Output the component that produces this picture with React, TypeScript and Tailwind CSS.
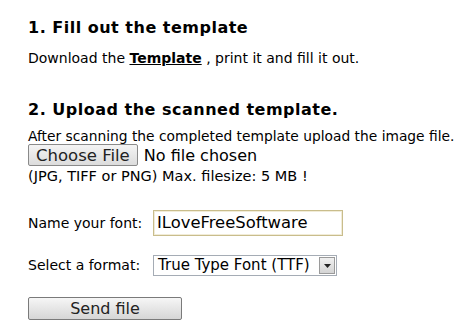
export default function App() {
  const f = { fontFamily: '"DejaVu Sans", Verdana, sans-serif' };
  return (
    <div className="w-[462px] h-[325px] bg-white text-black overflow-hidden pl-[28px] pt-[18px]" style={f}>
      <h2 className="text-[16px] font-bold leading-[20px] tracking-[0.5px]">1. Fill out the template</h2>
      <p className="text-[14px] leading-[16px] mt-[12px] whitespace-nowrap">
        Download the <span className="font-bold underline">Template</span> , print it and fill it out.
      </p>
      <h2 className="text-[16px] font-bold leading-[20px] tracking-[0.5px] mt-[34px]">2. Upload the scanned template.</h2>
      <p className="text-[13.8px] leading-[16px] mt-[8px] whitespace-nowrap">After scanning the completed template upload the image file.</p>
      <div className="flex items-center h-[22px]">
        <button className="h-[22px] px-[7px] border border-[#8a8a8a] rounded-[2px] bg-gradient-to-b from-[#f4f4f4] to-[#dcdcdc] text-[16.5px] leading-[19px] text-[#222]">Choose File</button>
        <span className="text-[16px] ml-[6px] leading-[19px]">No file chosen</span>
      </div>
      <p className="text-[14.5px] leading-[16px] mt-[2px] whitespace-nowrap">(JPG, TIFF or PNG) Max. filesize: 5 MB !</p>
      <div className="flex items-center mt-[26px]">
        <span className="text-[14px] w-[125px]">Name your font:</span>
        <div className="w-[190px] h-[26px] border border-[#c9bd8c] shadow-[inset_0_0_0_1px_#f1ecd8] flex items-center pl-[3px] text-[16.4px]">ILoveFreeSoftware</div>
      </div>
      <div className="flex items-center mt-[19px]">
        <span className="text-[14px] w-[125px]">Select a format:</span>
        <div className="w-[184px] h-[21px] border border-[#a5acb5] flex items-center justify-between pl-[4px] pr-[1px] text-[15px]">
          <span>True Type Font (TTF)</span>
          <div className="w-[16px] h-[17px] border border-[#9a9a9a] bg-gradient-to-b from-[#f0f0f0] to-[#d4d4d4] flex items-center justify-center">
            <svg width="7" height="4" viewBox="0 0 7 4"><path d="M0 0h7L3.5 4z" fill="#222" /></svg>
          </div>
        </div>
      </div>
      <button className="mt-[21px] w-[154px] h-[23px] border border-[#7a7a7a] rounded-[2px] bg-gradient-to-b from-[#f6f6f6] to-[#d6d6d6] text-[16px] leading-[20px] text-[#222] block">Send file</button>
    </div>
  );
}
